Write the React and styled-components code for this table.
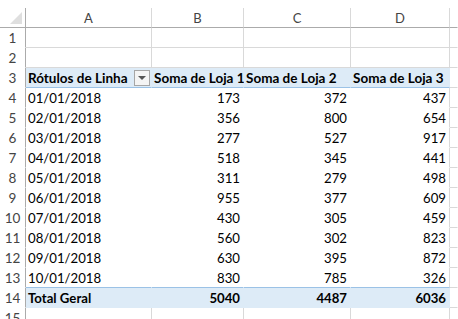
import React from "react";
import styled, { createGlobalStyle, css } from "styled-components";

const GlobalStyle = createGlobalStyle`
  html, body { margin: 0; padding: 0; background: #ffffff; }
  body { font-family: Lato, "Open Sans", sans-serif; overflow: hidden; }
`;

const GRID = "#d9d9d9";
const HEAD_LINE = "#ababab";
const BLUE_BG = "#ddebf7";
const BLUE_LINE = "#9bc2e6";

const Sheet = styled.div`
  display: grid;
  grid-template-columns: 26px 126px 92px 107px 99px 1fr;
  grid-template-rows: 20px;
  grid-auto-rows: 20px;
  padding-top: 8px;
  width: 458px;
  height: 319px;
  box-sizing: border-box;
  overflow: hidden;
  font-size: 13.2px;
  color: #000;
`;

const Corner = styled.div`
  position: relative;
  box-sizing: border-box;
  border-right: 1px solid ${HEAD_LINE};
  border-bottom: 1px solid ${HEAD_LINE};
  &::after {
    content: "";
    position: absolute;
    right: 3px;
    bottom: 3px;
    width: 0;
    height: 0;
    border-left: 12px solid transparent;
    border-bottom: 12px solid #dfdfdf;
  }
`;

const ColHeader = styled.div`
  box-sizing: border-box;
  display: flex;
  align-items: center;
  justify-content: center;
  padding-top: 1px;
  color: #444;
  font-size: 13px;
  border-right: 1px solid ${(p) => (p.$last ? "transparent" : GRID)};
  border-bottom: 1px solid ${HEAD_LINE};
`;

const RowHeader = styled.div`
  box-sizing: border-box;
  display: flex;
  align-items: center;
  justify-content: center;
  padding-top: 1px;
  color: #444;
  font-size: 13.5px;
  border-right: 1px solid ${HEAD_LINE};
  border-bottom: 1px solid transparent;
`;

const variants = {
  plain: css`
    border-right-color: ${GRID};
    border-bottom-color: ${GRID};
  `,
  edge: css`
    border-right-color: transparent;
    border-bottom-color: ${GRID};
  `,
  head: css`
    background: ${BLUE_BG};
    font-weight: 700;
    font-size: 13.5px;
    border-right-color: ${BLUE_BG};
    border-bottom-color: ${BLUE_LINE};
  `,
  data: css`
    border-right-color: #ffffff;
    border-bottom-color: #ffffff;
  `,
  dataLast: css`
    border-right-color: #ffffff;
    border-bottom-color: ${BLUE_LINE};
  `,
  total: css`
    background: ${BLUE_BG};
    font-weight: 700;
    border-right-color: ${BLUE_BG};
    border-bottom-color: ${BLUE_BG};
  `,
};

const Cell = styled.div`
  box-sizing: border-box;
  display: flex;
  align-items: center;
  justify-content: ${(p) => (p.$num ? "flex-end" : "space-between")};
  padding: 1px 3px 0 2px;
  white-space: nowrap;
  overflow: visible;
  border-right: 1px solid;
  border-bottom: 1px solid;
  ${(p) => variants[p.$kind || "plain"]}
  ${(p) => p.$edgeD && css`border-right-color: ${GRID};`}
`;

const FilterButton = styled.span`
  box-sizing: border-box;
  width: 16px;
  height: 16px;
  margin-right: -2px;
  border: 1px solid #a6a6a6;
  background: #f4f4f4;
  display: flex;
  align-items: center;
  justify-content: center;
  &::after {
    content: "";
    width: 0;
    height: 0;
    border-left: 4px solid transparent;
    border-right: 4px solid transparent;
    border-top: 4px solid #555;
  }
`;

const rows = [
  ["01/01/2018", 173, 372, 437],
  ["02/01/2018", 356, 800, 654],
  ["03/01/2018", 277, 527, 917],
  ["04/01/2018", 518, 345, 441],
  ["05/01/2018", 311, 279, 498],
  ["06/01/2018", 955, 377, 609],
  ["07/01/2018", 430, 305, 459],
  ["08/01/2018", 560, 302, 823],
  ["09/01/2018", 630, 395, 872],
  ["10/01/2018", 830, 785, 326],
];

function EmptyRow({ n }) {
  return (
    <>
      <RowHeader>{n}</RowHeader>
      <Cell />
      <Cell />
      <Cell />
      <Cell />
      <Cell $kind="edge" />
    </>
  );
}

export default function App() {
  return (
    <>
      <GlobalStyle />
      <Sheet>
        <Corner />
        <ColHeader>A</ColHeader>
        <ColHeader>B</ColHeader>
        <ColHeader>C</ColHeader>
        <ColHeader>D</ColHeader>
        <ColHeader $last />

        <EmptyRow n={1} />
        <EmptyRow n={2} />

        <RowHeader>3</RowHeader>
        <Cell $kind="head">
          <span>Rótulos de Linha</span>
          <FilterButton />
        </Cell>
        <Cell $kind="head">Soma de Loja 1</Cell>
        <Cell $kind="head">Soma de Loja 2</Cell>
        <Cell $kind="head">Soma de Loja 3</Cell>
        <Cell $kind="edge" />

        {rows.map((r, i) => {
          const kind = i === rows.length - 1 ? "dataLast" : "data";
          return (
            <React.Fragment key={r[0]}>
              <RowHeader>{i + 4}</RowHeader>
              <Cell $kind={kind}>{r[0]}</Cell>
              <Cell $kind={kind} $num>{r[1]}</Cell>
              <Cell $kind={kind} $num>{r[2]}</Cell>
              <Cell $kind={kind} $num $edgeD>{r[3]}</Cell>
              <Cell $kind="edge" />
            </React.Fragment>
          );
        })}

        <RowHeader>14</RowHeader>
        <Cell $kind="total">Total Geral</Cell>
        <Cell $kind="total" $num>5040</Cell>
        <Cell $kind="total" $num>4487</Cell>
        <Cell $kind="total" $num>6036</Cell>
        <Cell $kind="edge" />

        <EmptyRow n={15} />
      </Sheet>
    </>
  );
}
